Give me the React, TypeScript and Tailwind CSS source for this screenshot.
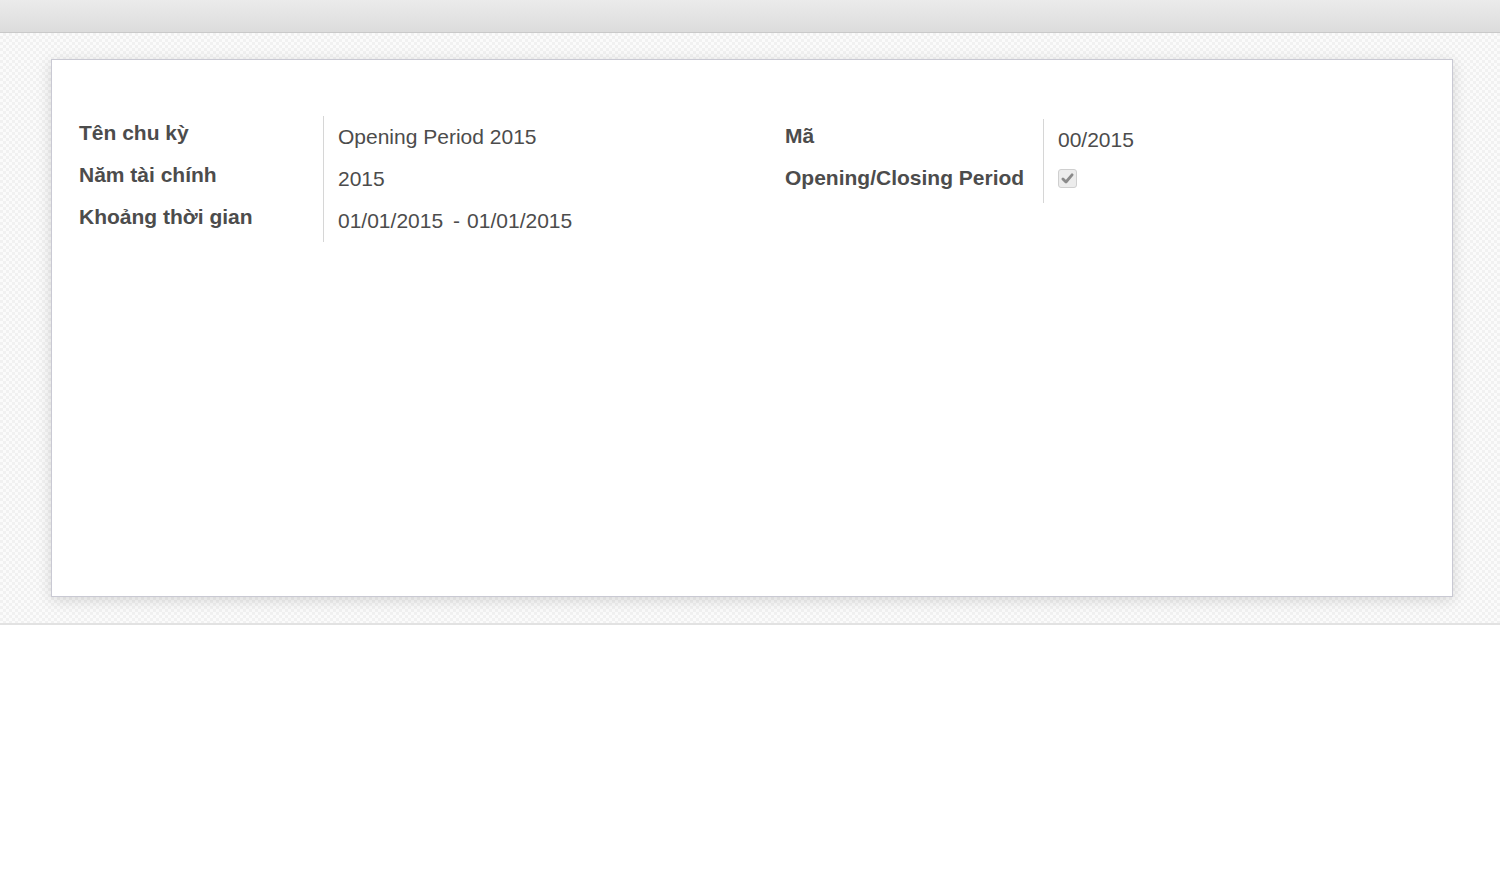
import React from "react";

function Checkbox() {
  return (
    <div className="mt-[8px] flex h-[19px] w-[19px] items-center justify-center rounded-[3px] border border-[#cfcfcf] bg-[#ececec]">
      <svg width="13" height="13" viewBox="0 0 12 12">
        <path d="M1.8 6.4 L4.6 9.2 L10.2 2.6" fill="none" stroke="#8a8a8a" strokeWidth="2.6" strokeLinecap="round" strokeLinejoin="round" />
      </svg>
    </div>
  );
}

export default function App() {
  const font = { fontFamily: '"Liberation Sans", Arial, sans-serif' };
  return (
    <div className="min-h-[874px] w-[1500px] bg-white text-[#4c4c4c]" style={font}>
      <div className="h-[33px] border-b border-[#c9c9c9] bg-gradient-to-b from-[#ebebeb] to-[#dcdcdc]" />
      <div className="border-b-2 border-[#e2e2e2] bg-[repeating-conic-gradient(#f1f1f1_0_25%,#fbfbfb_0_50%)] bg-[length:6px_6px] pb-[26px] pl-[51px] pr-[47px] pt-[26px]">
        <div className="h-[538px] border border-[#c9c9d3] bg-white shadow-[0_3px_14px_rgba(0,0,0,0.14)]">
          <div className="flex pl-[27px]">
            {/* Group 1 */}
            <div className="mt-[56px] flex w-[706px]">
              <div className="w-[245px] border-r border-[#d6d6d6] text-[21px] font-bold">
                <div className="h-[42px] pt-[5px] leading-[24px]">Tên chu kỳ</div>
                <div className="h-[42px] pt-[5px] leading-[24px]">Năm tài chính</div>
                <div className="h-[42px] pt-[5px] leading-[24px]">Khoảng thời gian</div>
              </div>
              <div className="pl-[14px] text-[21px]">
                <div className="h-[42px] pt-[9px] leading-[24px]">Opening Period 2015</div>
                <div className="h-[42px] pt-[9px] leading-[24px]">2015</div>
                <div className="h-[42px] pt-[9px] leading-[24px]">
                  <span>01/01/2015</span>
                  <span className="ml-[10px] mr-[7px]">-</span>
                  <span>01/01/2015</span>
                </div>
              </div>
            </div>
            {/* Group 2 */}
            <div className="mt-[59px] flex">
              <div className="h-[84px] w-[259px] border-r border-[#d6d6d6] text-[21px] font-bold">
                <div className="h-[42px] pt-[5px] leading-[24px]">Mã</div>
                <div className="h-[42px] pt-[5px] leading-[24px]">Opening/Closing Period</div>
              </div>
              <div className="pl-[14px] text-[21px]">
                <div className="h-[42px] pt-[9px] leading-[24px]">00/2015</div>
                <div className="h-[42px]">
                  <Checkbox />
                </div>
              </div>
            </div>
          </div>
        </div>
      </div>
    </div>
  );
}
